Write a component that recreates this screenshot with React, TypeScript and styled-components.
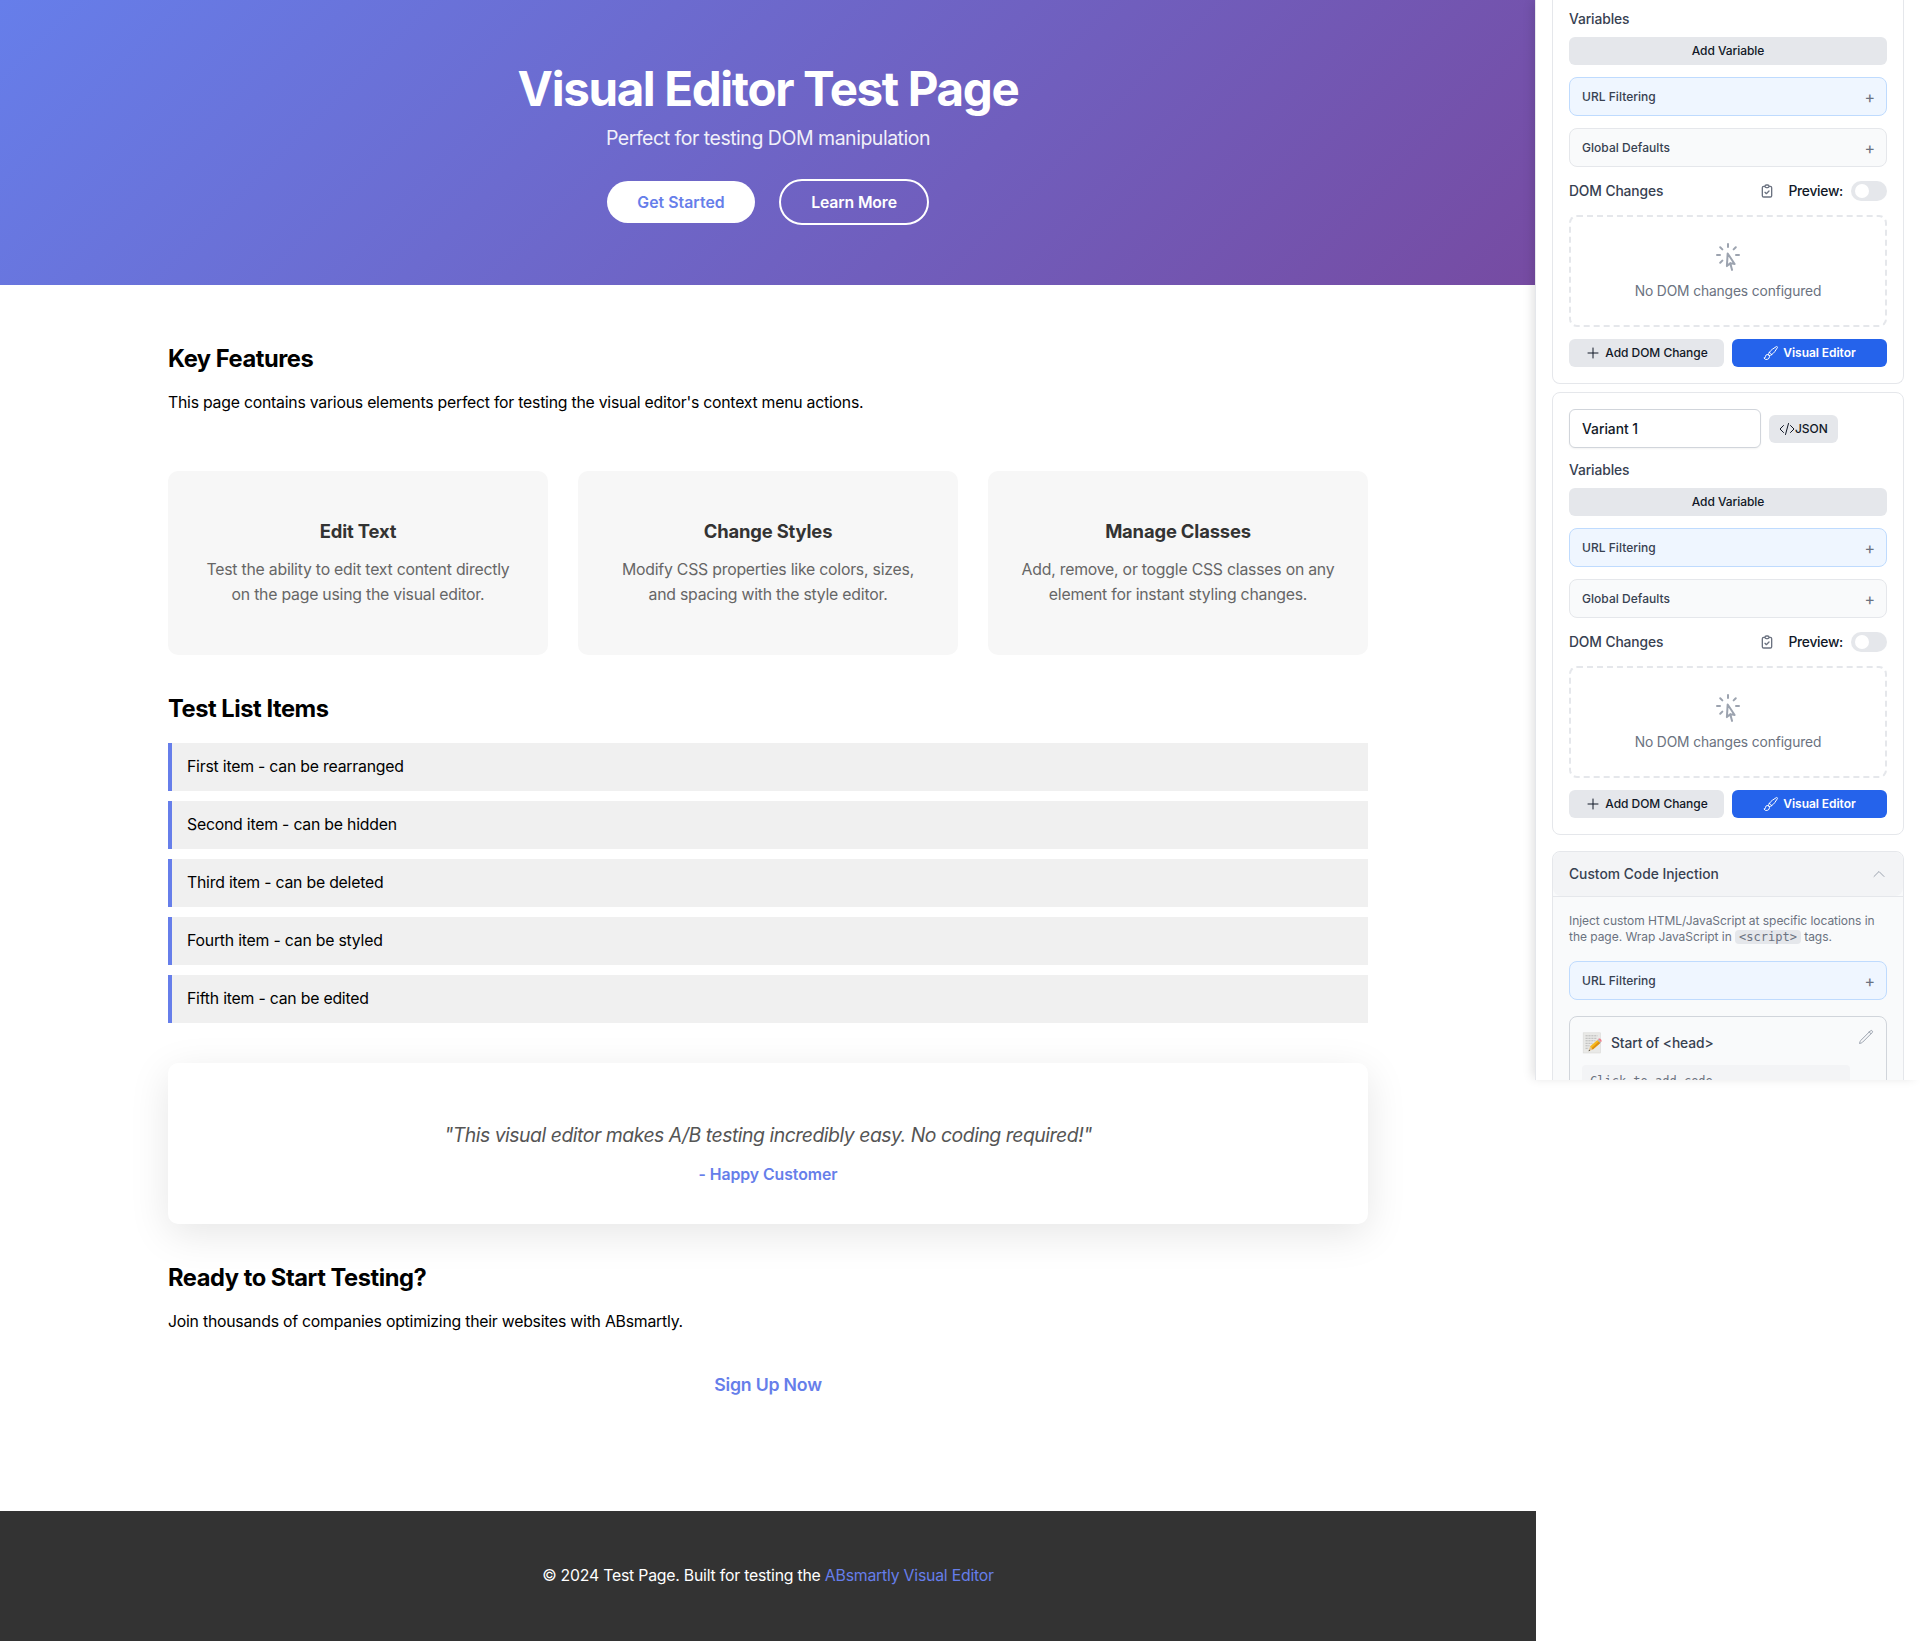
import React from "react";
import styled, { createGlobalStyle } from "styled-components";

const GlobalStyle = createGlobalStyle`
  *, *::before, *::after { box-sizing: border-box; }
  body {
    margin: 0;
    background: #fff;
    color: #000;
    font-family: Inter, "Liberation Sans", sans-serif;
  }
  h1, h2, h3, p, ul { margin: 0; padding: 0; }
  button, input { font-family: inherit; }
`;

/* ---------- Page ---------- */

const Layout = styled.div`
  display: flex;
  align-items: flex-start;
  width: 1920px;
  height: 1641px;
  overflow: hidden;
`;

const Page = styled.div`
  display: flex;
  flex-direction: column;
  flex: 0 0 1536px;
  height: 100%;
`;

const Hero = styled.header`
  display: flex;
  flex-direction: column;
  align-items: center;
  height: 285px;
  padding-top: 60px;
  color: #fff;
  background: linear-gradient(135deg, #667eea 0%, #764ba2 100%);
`;

const HeroTitle = styled.h1`
  font-size: 47.5px;
  line-height: 57px;
  font-weight: 700;
  letter-spacing: -1.36px;
`;

const HeroSubtitle = styled.p`
  margin-top: 10px;
  font-size: 19.5px;
  line-height: 23px;
  letter-spacing: -0.48px;
  opacity: 0.9;
`;

const HeroActions = styled.div`
  display: flex;
  align-items: center;
  gap: 24px;
  margin-top: 29px;
`;

const HeroButton = styled.button<{ $outline?: boolean }>`
  width: ${(p) => (p.$outline ? 150 : 148)}px;
  height: ${(p) => (p.$outline ? 46 : 42)}px;
  padding: 0;
  border: ${(p) => (p.$outline ? "2px solid #fff" : "none")};
  border-radius: 25px;
  background: ${(p) => (p.$outline ? "transparent" : "#fff")};
  color: ${(p) => (p.$outline ? "#fff" : "#667eea")};
  font-size: 15.8px;
  font-weight: 600;
  letter-spacing: ${(p) => (p.$outline ? -0.13 : 0.05)}px;
`;

const Content = styled.main`
  width: 1200px;
  margin: 0 auto;
  padding-top: 60px;
  flex: 1;
`;

const SectionTitle = styled.h2`
  font-size: 23.7px;
  line-height: 28px;
  font-weight: 700;
  letter-spacing: -0.46px;
  margin-bottom: 20px;
`;

const Paragraph = styled.p`
  font-size: 15.8px;
  line-height: 19px;
  letter-spacing: -0.23px;
`;

const CardGrid = styled.div`
  display: grid;
  grid-template-columns: repeat(3, 1fr);
  gap: 30px;
  margin: 59px 0 40px;
`;

const FeatureCard = styled.article`
  height: 184px;
  padding: 49px 30px 0;
  border-radius: 10px;
  background: #f7f7f7;
  text-align: center;
`;

const FeatureTitle = styled.h3`
  color: #333;
  font-size: 18.4px;
  line-height: 22px;
  font-weight: 700;
  letter-spacing: -0.16px;
`;

const FeatureText = styled.p`
  margin-top: 15px;
  color: #666;
  font-size: 15.8px;
  line-height: 25.4px;
  letter-spacing: -0.22px;
`;

const ItemList = styled.ul`
  display: flex;
  flex-direction: column;
  gap: 10px;
  list-style: none;
`;

const Item = styled.li`
  height: 48px;
  padding-left: 15px;
  border-left: 4px solid #667eea;
  background: #f0f0f0;
  font-size: 15.8px;
  line-height: 48px;
  letter-spacing: -0.21px;
`;

const Testimonial = styled.section`
  height: 161px;
  margin: 40px 0;
  padding-top: 60px;
  border-radius: 10px;
  background: #fff;
  box-shadow: 0 10px 40px rgba(0, 0, 0, 0.1);
  text-align: center;
`;

const Quote = styled.p`
  color: #555;
  font-size: 19.4px;
  line-height: 24px;
  font-style: italic;
  letter-spacing: -0.476px;
`;

const Author = styled.p`
  margin-top: 18px;
  color: #667eea;
  font-size: 15.8px;
  line-height: 20px;
  font-weight: 600;
  letter-spacing: -0.04px;
`;

const SignUp = styled.a`
  display: block;
  margin-top: 43px;
  color: #667eea;
  font-size: 17.7px;
  line-height: 22px;
  font-weight: 600;
  letter-spacing: -0.2px;
  text-align: center;
`;

const Footer = styled.footer`
  height: 130px;
  padding-top: 55px;
  background: #333;
  color: #fff;
  font-size: 15.8px;
  line-height: 20px;
  letter-spacing: -0.21px;
  text-align: center;
  a { color: #667eea; }
`;

/* ---------- Side panel ---------- */

const Panel = styled.aside`
  position: relative;
  flex: 0 0 385px;
  height: 1080px;
  margin-left: -1px;
  padding: 0 16px;
  border-left: 1px solid #e5e7eb;
  background: #fff;
  box-shadow: -4px 0 10px -2px rgba(0, 0, 0, 0.13);
`;

const PanelScroll = styled.div`
  height: 1080px;
  overflow: hidden;
`;

const VariantCard = styled.section<{ $cut?: boolean }>`
  display: flex;
  flex-direction: column;
  gap: 12px;
  margin-bottom: 8px;
  padding: ${(p) => (p.$cut ? "9px 16px 16px" : "16px")};
  border: 1px solid #e5e7eb;
  border-top-width: ${(p) => (p.$cut ? 0 : 1)}px;
  border-radius: ${(p) => (p.$cut ? "0 0 8px 8px" : "8px")};
`;

const Row = styled.div`
  display: flex;
  align-items: center;
  gap: 8px;
`;

const NameInput = styled.input`
  width: 192px;
  height: 39px;
  padding: 0 12px;
  border: 1px solid #d1d5db;
  border-radius: 6px;
  background: #fff;
  box-shadow: 0 1px 2px rgba(0, 0, 0, 0.05);
  color: #111827;
  font-size: 13.8px;
  font-weight: 500;
`;

const Button = styled.button<{ $primary?: boolean; $fill?: boolean; $gap?: number }>`
  display: flex;
  align-items: center;
  justify-content: center;
  gap: ${(p) => p.$gap ?? 4}px;
  flex: ${(p) => (p.$fill ? "1 1 0" : "none")};
  height: 28px;
  padding: 0 10px;
  border: 0;
  border-radius: 6px;
  background: ${(p) => (p.$primary ? "#2563eb" : "#e5e7eb")};
  color: ${(p) => (p.$primary ? "#fff" : "#111827")};
  font-size: 12px;
  font-weight: ${(p) => (p.$primary ? 600 : 500)};
  line-height: 16px;
  letter-spacing: -0.05px;
  white-space: nowrap;
`;

const VariablesGroup = styled.div`
  display: flex;
  flex-direction: column;
  gap: 8px;
`;

const Label = styled.span`
  color: #374151;
  font-size: 13.8px;
  line-height: 20px;
  font-weight: 500;
  letter-spacing: -0.1px;
`;

const Collapse = styled.div<{ $blue?: boolean }>`
  display: flex;
  align-items: center;
  justify-content: space-between;
  height: 39px;
  padding: 0 11px 0 12px;
  border: 1px solid ${(p) => (p.$blue ? "#bfdbfe" : "#e5e7eb")};
  border-radius: 8px;
  background: ${(p) => (p.$blue ? "#eff6ff" : "#f9fafb")};
  color: #374151;
  font-size: 12px;
  font-weight: 500;
  letter-spacing: 0.03px;
`;

const Sign = styled.span`
  color: #6b7280;
  font-size: 16px;
  line-height: 20px;
  font-weight: 400;
`;

const ChangesHeader = styled.div`
  display: flex;
  align-items: center;
  height: 24px;
`;

const ClipboardSlot = styled.span`
  display: flex;
  margin: 0 13px 0 auto;
  color: #6b7280;
`;

const PreviewLabel = styled.span`
  margin-right: 8px;
  color: #111827;
  font-size: 13.8px;
  line-height: 20px;
  font-weight: 500;
  letter-spacing: -0.26px;
`;

const Toggle = styled.span`
  display: flex;
  align-items: center;
  width: 36px;
  height: 20px;
  padding-left: 4px;
  border-radius: 10px;
  background: #e5e7eb;
  &::after {
    content: "";
    width: 14px;
    height: 14px;
    border-radius: 50%;
    background: #fff;
  }
`;

const EmptyBox = styled.div`
  display: flex;
  flex-direction: column;
  align-items: center;
  gap: 8px;
  height: 112px;
  padding-top: 24px;
  border: 2px dashed #e5e7eb;
  border-radius: 8px;
  color: #9ca3af;
`;

const EmptyText = styled.span`
  color: #6b7280;
  font-size: 13.8px;
  line-height: 20px;
  letter-spacing: -0.13px;
`;

const InjectionCard = styled.section`
  margin-top: 16px;
  height: 300px;
  border: 1px solid #e5e7eb;
  border-radius: 8px;
  background: #f9fafb;
`;

const InjectionHeader = styled.div`
  display: flex;
  align-items: center;
  justify-content: space-between;
  height: 44px;
  padding: 0 16px;
  border-radius: 8px;
  background: #f3f4f6;
  color: #9ca3af;
  ${Label} { letter-spacing: 0; }
`;

const InjectionBody = styled.div`
  display: flex;
  flex-direction: column;
  gap: 16px;
  padding: 16px;
  border-top: 1px solid #e5e7eb;
`;

const Hint = styled.p`
  height: 32px;
  color: #6b7280;
  font-size: 12px;
  line-height: 16px;
  letter-spacing: -0.04px;
`;

const Chip = styled.code`
  display: inline-block;
  height: 14px;
  padding: 0 4px;
  border-radius: 4px;
  background: #e5e7eb;
  font-family: "DejaVu Sans Mono", monospace;
  font-size: 12px;
  letter-spacing: 0;
  line-height: 14px;
`;

const SnippetCard = styled.div`
  display: flex;
  align-items: flex-start;
  justify-content: space-between;
  height: 120px;
  padding: 12px;
  border: 1px solid #d1d5db;
  border-radius: 8px;
  color: #9ca3af;
`;

const SnippetMain = styled.div`
  display: flex;
  flex-direction: column;
  gap: 11px;
  width: 268px;
  padding-top: 3px;
`;

const SnippetTitle = styled.div`
  display: flex;
  align-items: center;
  gap: 9px;
  height: 22px;
`;

const CodePreview = styled.div`
  height: 40px;
  padding: 8px;
  border-radius: 4px;
  background: #f3f4f6;
  color: #6b7280;
  font-family: "DejaVu Sans Mono", monospace;
  font-size: 12px;
  line-height: 16px;
`;

/* ---------- Icons ---------- */

const paths = {
  code: "M17.25 6.75 22.5 12l-5.25 5.25m-10.5 0L1.5 12l5.25-5.25m7.5-3-4.5 16.5",
  plus: "M12 4.5v15m7.5-7.5h-15",
  brush:
    "M9.53 16.122a3 3 0 0 0-5.78 1.128 2.25 2.25 0 0 1-2.4 2.245 4.5 4.5 0 0 0 8.4-2.245c0-.399-.078-.78-.22-1.128Zm0 0a15.998 15.998 0 0 0 3.388-1.62m-5.043-.025a15.994 15.994 0 0 1 1.622-3.395m3.42 3.42a15.995 15.995 0 0 0 4.764-4.648l3.876-5.814a1.151 1.151 0 0 0-1.597-1.597L14.146 6.32a15.996 15.996 0 0 0-4.649 4.763m3.42 3.42a6.776 6.776 0 0 0-3.42-3.42",
  clipboard:
    "M9 5H7a2 2 0 00-2 2v12a2 2 0 002 2h10a2 2 0 002-2V7a2 2 0 00-2-2h-2M9 5a2 2 0 002 2h2a2 2 0 002-2M9 5a2 2 0 012-2h2a2 2 0 012 2m-6 9l2 2 4-4",
  cursor:
    "M15.042 21.672 13.684 16.6m0 0-2.51 2.225.569-9.47 5.227 7.917-3.286-.672ZM12 2.25V4.5m5.834.166-1.591 1.591M20.25 10.5H18M7.757 14.743l-1.59 1.59M6 10.5H3.75m4.007-4.243-1.59-1.59",
  chevronUp: "m4.5 15.75 7.5-7.5 7.5 7.5",
  pencil:
    "m16.862 4.487 1.687-1.688a1.875 1.875 0 1 1 2.652 2.652L6.832 19.82a4.5 4.5 0 0 1-1.897 1.13l-2.685.8.8-2.685a4.5 4.5 0 0 1 1.13-1.897L16.863 4.487Zm0 0L19.5 7.125",
};

interface IconProps {
  name: keyof typeof paths;
  size?: number;
  weight?: number;
}

const Glyph = styled.svg`
  flex: none;
  fill: none;
  stroke: currentColor;
  stroke-linecap: round;
  stroke-linejoin: round;
`;

const Icon = ({ name, size = 16, weight = 1.5 }: IconProps) => (
  <Glyph width={size} height={size} viewBox="0 0 24 24" strokeWidth={weight}>
    <path d={paths[name]} />
  </Glyph>
);

const MemoIcon = () => (
  <svg width="20" height="22" viewBox="0 0 20 22" fill="none">
    <rect x="1.2" y="0.8" width="17.2" height="20.2" fill="#e9e9e7" stroke="#dadad8" strokeWidth="0.6" />
    <path
      d="M3.5 3.8h12M3.5 6.3h11M3.5 8.8h10M3.5 11.3h7M3.5 13.8h4M3.5 16.3h3"
      stroke="#b4b4b4"
      strokeWidth="0.9"
      strokeDasharray="2.2 0.7"
    />
    <path d="M6.6 19.2 8 14.6 10.8 17.6Z" fill="#e8c48c" />
    <path d="M6.6 19.2 7.1 17.6 8.1 18.7Z" fill="#444" />
    <path d="M8 14.6 15.4 7.9 18.3 11 10.8 17.6Z" fill="#f7b91c" />
    <path d="M9.6 16.2 16.8 9.6 18.3 11 10.8 17.6Z" fill="#dd8f10" />
    <path d="M15.4 7.9 16.2 7.1 19 10.2 18.3 11Z" fill="#a9b3b8" />
    <path d="M16.2 7.1C17.3 6.2 18.4 6.6 19.1 7.5S20 9.5 19 10.2Z" fill="#f0808a" />
  </svg>
);

/* ---------- Sections ---------- */

const features = [
  ["Edit Text", "Test the ability to edit text content directly", "on the page using the visual editor."],
  ["Change Styles", "Modify CSS properties like colors, sizes,", "and spacing with the style editor."],
  ["Manage Classes", "Add, remove, or toggle CSS classes on any", "element for instant styling changes."],
];

const listItems = [
  "First item - can be rearranged",
  "Second item - can be hidden",
  "Third item - can be deleted",
  "Fourth item - can be styled",
  "Fifth item - can be edited",
];

const CollapseRow = ({ label, blue }: { label: string; blue?: boolean }) => (
  <Collapse $blue={blue}>
    <span>{label}</span>
    <Sign>+</Sign>
  </Collapse>
);

const Variant = ({ name }: { name?: string }) => (
  <VariantCard $cut={!name}>
    {name && (
      <Row>
        <NameInput defaultValue={name} />
        <Button $gap={0}>
          <Icon name="code" />
          JSON
        </Button>
      </Row>
    )}
    <VariablesGroup>
      <Label>Variables</Label>
      <Button>Add Variable</Button>
    </VariablesGroup>
    <CollapseRow label="URL Filtering" blue />
    <CollapseRow label="Global Defaults" />
    <ChangesHeader>
      <Label>DOM Changes</Label>
      <ClipboardSlot>
        <Icon name="clipboard" weight={2} />
      </ClipboardSlot>
      <PreviewLabel>Preview:</PreviewLabel>
      <Toggle />
    </ChangesHeader>
    <EmptyBox>
      <Icon name="cursor" size={32} />
      <EmptyText>No DOM changes configured</EmptyText>
    </EmptyBox>
    <Row>
      <Button $fill>
        <Icon name="plus" />
        Add DOM Change
      </Button>
      <Button $fill $primary>
        <Icon name="brush" />
        Visual Editor
      </Button>
    </Row>
  </VariantCard>
);

export default function App() {
  return (
    <>
      <GlobalStyle />
      <Layout>
        <Page>
          <Hero>
            <HeroTitle>Visual Editor Test Page</HeroTitle>
            <HeroSubtitle>Perfect for testing DOM manipulation</HeroSubtitle>
            <HeroActions>
              <HeroButton>Get Started</HeroButton>
              <HeroButton $outline>Learn More</HeroButton>
            </HeroActions>
          </Hero>
          <Content>
            <SectionTitle>Key Features</SectionTitle>
            <Paragraph>
              This page contains various elements perfect for testing the visual editor's context menu actions.
            </Paragraph>
            <CardGrid>
              {features.map(([title, first, second]) => (
                <FeatureCard key={title}>
                  <FeatureTitle>{title}</FeatureTitle>
                  <FeatureText>
                    {first}
                    <br />
                    {second}
                  </FeatureText>
                </FeatureCard>
              ))}
            </CardGrid>
            <SectionTitle>Test List Items</SectionTitle>
            <ItemList>
              {listItems.map((text) => (
                <Item key={text}>{text}</Item>
              ))}
            </ItemList>
            <Testimonial>
              <Quote>"This visual editor makes A/B testing incredibly easy. No coding required!"</Quote>
              <Author>- Happy Customer</Author>
            </Testimonial>
            <SectionTitle>Ready to Start Testing?</SectionTitle>
            <Paragraph>Join thousands of companies optimizing their websites with ABsmartly.</Paragraph>
            <SignUp>Sign Up Now</SignUp>
          </Content>
          <Footer>
            © 2024 Test Page. Built for testing the <a>ABsmartly Visual Editor</a>
          </Footer>
        </Page>
        <Panel>
          <PanelScroll>
            <Variant />
            <Variant name="Variant 1" />
            <InjectionCard>
              <InjectionHeader>
                <Label>Custom Code Injection</Label>
                <Icon name="chevronUp" />
              </InjectionHeader>
              <InjectionBody>
                <Hint>
                  Inject custom HTML/JavaScript at specific locations in the page. Wrap JavaScript in{" "}
                  <Chip>&lt;script&gt;</Chip> tags.
                </Hint>
                <CollapseRow label="URL Filtering" blue />
                <SnippetCard>
                  <SnippetMain>
                    <SnippetTitle>
                      <MemoIcon />
                      <Label>Start of &lt;head&gt;</Label>
                    </SnippetTitle>
                    <CodePreview>Click to add code</CodePreview>
                  </SnippetMain>
                  <Icon name="pencil" />
                </SnippetCard>
              </InjectionBody>
            </InjectionCard>
          </PanelScroll>
        </Panel>
      </Layout>
    </>
  );
}
